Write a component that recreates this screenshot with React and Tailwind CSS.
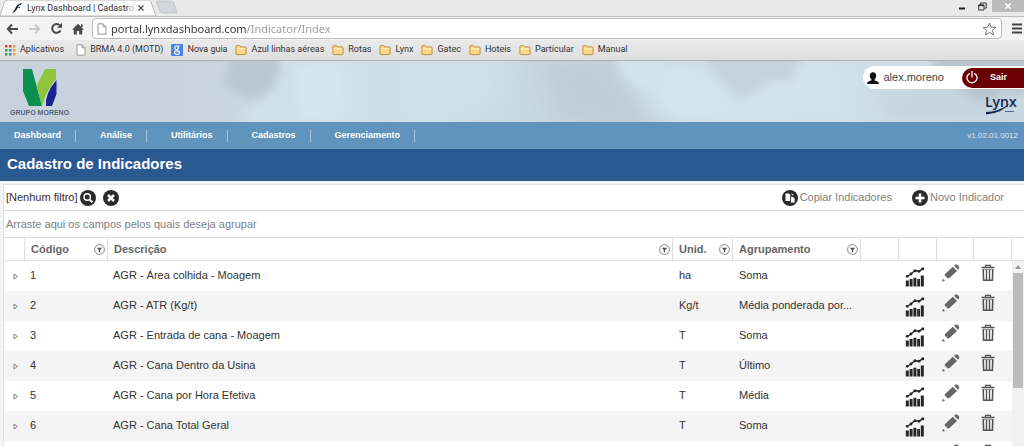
import { useState } from 'react';

const bookmarks = ['Azul linhas aéreas', 'Rotas', 'Lynx', 'Gatec', 'Hoteis', 'Particular', 'Manual'];
const menu = ['Dashboard', 'Análise', 'Utilitários', 'Cadastros', 'Gerenciamento'];

const rows = [
  { code: '1', name: 'AGR - Área colhida - Moagem', unit: 'ha', group: 'Soma' },
  { code: '2', name: 'AGR - ATR (Kg/t)', unit: 'Kg/t', group: 'Média ponderada por...' },
  { code: '3', name: 'AGR - Entrada de cana - Moagem', unit: 'T', group: 'Soma' },
  { code: '4', name: 'AGR - Cana Dentro da Usina', unit: 'T', group: 'Último' },
  { code: '5', name: 'AGR - Cana por Hora Efetiva', unit: 'T', group: 'Média' },
  { code: '6', name: 'AGR - Cana Total Geral', unit: 'T', group: 'Soma' },
  { code: '', name: '', unit: '', group: '' },
];

const appColors = ['#d9453a', '#d9453a', '#e8a13a', '#3f9c55', '#4a7fd6', '#e8a13a', '#3f9c55', '#4a7fd6', '#e8a13a'];

function FolderIcon() {
  return (
    <svg width="12" height="12" viewBox="0 0 13 12">
      <path d="M1 10V2.2Q1 1.3 1.9 1.3H5L6.2 2.7H11Q12 2.7 12 3.7V10Q12 11 11 11H2Q1 11 1 10Z" fill="#fbd98b" stroke="#b98a3c" />
      <path d="M2 4.5H11" stroke="#fff0c4" />
    </svg>
  );
}

function PageIcon({ className }) {
  return (
    <svg className={className} viewBox="0 0 10 12" fill="#fff" stroke="#8f8f8f" strokeWidth="0.9">
      <path d="M1 .8H6L9 3.8V11.2H1Z" />
      <path d="M6 .8V3.8H9" fill="none" />
    </svg>
  );
}

function FilterIcon() {
  return (
    <svg width="11" height="11" viewBox="0 0 11 11">
      <circle cx="5.5" cy="5.5" r="4.9" fill="#fff" stroke="#777" strokeWidth="0.9" />
      <path d="M2.8 3.8H8.2L6.2 6V8.3H4.8V6Z" fill="#555" />
    </svg>
  );
}

function ChartIcon() {
  return (
    <svg width="20" height="20" viewBox="0 0 20 20" fill="#262626">
      <path d="M.8 13.5H3.8V19.5H.8ZM4.6 12H7.6V19.5H4.6ZM8.4 10.8H11.4V19.5H8.4ZM12.2 12H15V19.5H12.2ZM15.8 8.5H18.8V19.5H15.8Z" />
      <path d="M2 9.5L6 7L10 3.5L14 4.2L18 1.6" fill="none" stroke="#262626" strokeWidth="1.4" />
      <circle cx="2.2" cy="9.3" r="1.4" />
      <circle cx="6" cy="7" r="1.4" />
      <circle cx="10" cy="3.7" r="1.5" />
      <circle cx="14" cy="4.3" r="1.4" />
      <circle cx="17.8" cy="1.7" r="1.5" />
    </svg>
  );
}

function PencilIcon() {
  return (
    <svg width="18" height="18" viewBox="0 0 18 18" fill="#666">
      <path d="M10.8 2.8L15 6.9L7.2 14.3L5 14.2L4.4 12.6L2.9 12.3L2.8 10.2Z" />
      <path d="M12 1.8L13.4 .6Q15 0 16.4 1.4Q17.8 2.8 17 4.4L16 5.8Z" />
      <path d="M.6 17.2L.9 15.2L2.6 16.8Z" stroke="#666" strokeWidth="0.6" />
    </svg>
  );
}

function TrashIcon() {
  return (
    <svg width="14" height="18" viewBox="0 0 14 18" fill="none" stroke="#555">
      <path d="M.5 3.5H13.5" strokeWidth="1.6" />
      <path d="M4.5 3V1.3H9.5V3" strokeWidth="1.2" />
      <path d="M2 5.6H12" stroke="#8a8a8a" />
      <path d="M2.2 5.2L2.6 16.3H11.4L11.8 5.2" strokeWidth="1.6" />
      <path d="M5.5 6V16M8.5 6V16" strokeWidth="1.4" />
    </svg>
  );
}

function Clouds() {
  return (
    <svg className="absolute inset-0 h-full w-full" viewBox="0 0 1024 61" preserveAspectRatio="none">
      <defs>
        <linearGradient id="sky">
          <stop offset="0" stopColor="#c6d3dc" />
          <stop offset="0.2" stopColor="#c8d5de" />
          <stop offset="0.32" stopColor="#d0e0e9" />
          <stop offset="0.5" stopColor="#c9dae4" />
          <stop offset="0.62" stopColor="#c0ced7" />
          <stop offset="0.7" stopColor="#cfe0e9" />
          <stop offset="1" stopColor="#cbdbe5" />
        </linearGradient>
        <filter id="soft" x="-40%" y="-60%" width="180%" height="220%"><feGaussianBlur stdDeviation="14 9" /></filter>
        <filter id="edge" x="-20%" y="-40%" width="140%" height="180%">
          <feTurbulence type="fractalNoise" baseFrequency="0.05" numOctaves="3" seed="4" result="n" />
          <feDisplacementMap in="SourceGraphic" in2="n" scale="14" />
          <feGaussianBlur stdDeviation="4" />
        </filter>
      </defs>
      <rect width="1024" height="61" fill="url(#sky)" />
      <g filter="url(#soft)">
        <path d="M290 0H345V61H270L280 30Z" fill="#d4e6f0" />
        <path d="M400 0H500L490 40L440 61H410Z" fill="#d0e1eb" />
        <path d="M540 0H615L655 61H560Z" fill="#bfcdd6" />
        <path d="M620 0H700L735 40L720 61H660Z" fill="#d3e5ee" />
        <path d="M790 0H850V61H730L750 30Z" fill="#d3e3ec" />
        <path d="M880 30L960 26L1024 40V61H890Z" fill="#c5d4df" />
      </g>
      <g filter="url(#edge)">
        <path d="M228 -8H278L282 18L270 28L262 36H240L224 24Z" fill="#bac8d2" />
        <path d="M282 8L292 2L300 61H236L244 48L264 38Z" fill="#cfe0ea" />
        <path d="M700 -8H805L792 14L770 24L748 30L740 38L722 20Z" fill="#c3d2db" />
        <path d="M615 -8H660L665 28L640 28L624 14Z" fill="#d1e3ec" />
        <path d="M930 -8H1032V30L980 40L960 30L938 14Z" fill="#b6c5d0" />
      </g>
    </svg>
  );
}

function BrowserBar() {
  return (
    <div className="bg-[#e9e9e9] font-[Roboto,sans-serif] text-[#333]">
      <div className="flex h-4 items-start">
        <div className="relative flex h-4 w-[156px] items-center gap-1 pl-3">
          <svg className="absolute inset-0" width="156" height="16" viewBox="0 0 156 16">
            <path d="M0 16L4 3Q5 0 8 0H148Q150 0 151 2L156 16Z" fill="#fbfbfb" stroke="#bbb" />
          </svg>
          <svg className="relative" width="11" height="11" viewBox="0 0 11 11">
            <path d="M0 10Q3 7 4 4Q5 1 10 0L9 2Q6 2 5.5 5Q4 9 0 10Z" fill="#1c2541" />
            <path d="M4 4L8 4.4" stroke="#1c2541" />
          </svg>
          <span className="relative min-w-[104px] whitespace-nowrap text-[9px] leading-4">Lynx Dashboard | Cadastr<span className="text-[#bbb]">o</span></span>
          <button aria-label="Fechar aba" className="relative">
            <svg width="6" height="6" viewBox="0 0 6 6" stroke="#555" strokeWidth="1.3"><path d="M.5 .5L5.5 5.5M5.5 .5L.5 5.5" /></svg>
          </button>
        </div>
        <svg width="22" height="14" viewBox="0 0 22 14"><path d="M0 1H15Q17 1 18 3L21 13H7Q5 13 4 11Z" fill="#d3d7dc" stroke="#c4c8cc" /></svg>
        <div className="ml-auto flex items-start">
          <button aria-label="Minimizar" className="flex h-3 w-5 items-center justify-center">
            <svg width="6" height="8" viewBox="0 0 6 8"><path d="M0 6.5H6" stroke="#222" strokeWidth="2" /></svg>
          </button>
          <button aria-label="Restaurar" className="flex h-3 w-5 items-center justify-center">
            <svg width="9" height="9" viewBox="0 0 9 9" fill="none" stroke="#333"><path d="M.7 3H6V8H.7ZM2.5 2.5V1H8.2V6.2H6.5" /><path d="M.5 3.4H6" strokeWidth="1.5" /></svg>
          </button>
          <button aria-label="Fechar" className="flex h-3 w-8 items-center justify-center bg-[#bcbcbc]">
            <svg width="6" height="6" viewBox="0 0 6 6" stroke="#fff" strokeWidth="1.5"><path d="M.5 .5L5.5 5.5M5.5 .5L.5 5.5" /></svg>
          </button>
        </div>
      </div>
      <div className="flex h-6 items-center border-t border-[#bdbdbd] bg-[#f3f3f3] pl-1.5">
        <button aria-label="Voltar" className="w-[22px]">
          <svg width="13" height="12" viewBox="0 0 13 12" fill="none" stroke="#4a4a4a" strokeWidth="2"><path d="M6 1.5L1.8 6L6 10.5M2 6H12" /></svg>
        </button>
        <button aria-label="Avançar" className="w-[22px]">
          <svg width="13" height="12" viewBox="0 0 13 12" fill="none" stroke="#c8c8c8" strokeWidth="2"><path d="M7 1.5L11.2 6L7 10.5M1 6H11" /></svg>
        </button>
        <button aria-label="Recarregar" className="w-[22px]">
          <svg width="13" height="13" viewBox="0 0 13 13" fill="none" stroke="#4a4a4a" strokeWidth="2"><path d="M10.5 8.5A4.4 4.4 0 1 1 9.8 3.4" /><path d="M12 .8V5.8H7Z" fill="#4a4a4a" stroke="none" /></svg>
        </button>
        <button aria-label="Início" className="w-5">
          <svg width="12" height="12" viewBox="0 0 12 12" fill="#4a4a4a"><path d="M6 .8L12 6.8H10.2V11.5H7.2V8H4.8V11.5H1.8V6.8H0Z" /><path d="M9 1.2H10.6V4H9Z" /></svg>
        </button>
        <div className="flex h-[21px] min-w-0 flex-1 items-center gap-1 rounded-sm border border-[#bdbdbd] bg-white px-1">
          <PageIcon className="h-3 w-2.5" />
          <input
            type="text"
            aria-label="Endereço"
            defaultValue="portal.lynxdashboard.com/Indicator/Index"
            className="h-[19px] min-w-0 flex-1 bg-[linear-gradient(90deg,#333_136px,#999_136px)] bg-clip-text font-['Noto_Sans',sans-serif] text-[11px] text-transparent outline-none"
          />
          <svg width="15" height="14" viewBox="0 0 15 14" fill="none" stroke="#777"><path d="M7.5 1L9.3 5.2L14 5.5L10.4 8.4L11.6 13L7.5 10.5L3.4 13L4.6 8.4L1 5.5L5.7 5.2Z" /></svg>
        </div>
        <button aria-label="Menu" className="flex w-[22px] justify-end pr-0.5">
          <svg width="10" height="11" viewBox="0 0 10 11" stroke="#444" strokeWidth="2"><path d="M0 1.5H10M0 5.5H10M0 9.5H10" /></svg>
        </button>
      </div>
      <div className="flex h-[21px] items-center gap-2 whitespace-nowrap border-b border-[#a9b3b8] bg-linear-to-b from-[#eaeaea] to-[#dedede] pl-[5px] text-[9px]">
        <a href="#apps" className="flex items-center gap-1 pr-1">
          <svg width="11" height="11" viewBox="0 0 11 11">
            {appColors.map((c, i) => <rect key={i} x={(i % 3) * 4} y={Math.floor(i / 3) * 4} width="2.5" height="2.5" fill={c} />)}
          </svg>
          Aplicativos
        </a>
        <a href="#brma" className="flex items-center gap-1"><PageIcon className="h-3 w-2.5" />BRMA 4.0 (MOTD)</a>
        <a href="#nova" className="flex items-center gap-1">
          <svg width="12" height="12" viewBox="0 0 12 12"><rect width="12" height="12" rx="1" fill="#4a83ec" /><g fill="none" stroke="#fff" strokeWidth="1.2"><circle cx="5.6" cy="3.8" r="1.8" /><ellipse cx="6" cy="8.6" rx="2.5" ry="1.8" /><path d="M6.5 2H8.5M6.5 5.3L5.5 6.6" /></g></svg>
          Nova guia
        </a>
        {bookmarks.map((b) => (
          <a key={b} href="#pasta" className="flex items-center gap-1"><FolderIcon />{b}</a>
        ))}
      </div>
    </div>
  );
}

function Header() {
  return (
    <header className="relative flex h-[61px] shrink-0 justify-between">
      <Clouds />
      <div className="relative flex flex-col items-center pl-2.5 pt-2">
        <svg width="36" height="38" viewBox="0 0 36 38">
          <path d="M1 0H10L20 37H7L1 22Z" fill="#0a9150" />
          <path d="M23 0H34V10Q25 20 20 37L14.5 17Z" fill="#8fc63d" />
          <path d="M34.5 11V25L30 37H24Q23 24 34.5 11Z" fill="#17248f" />
        </svg>
        <span className="mt-0.5 text-[7px] leading-2 font-bold text-[#54657f]">GRUPO MORENO</span>
      </div>
      <div className="relative flex flex-col items-end pt-[5px]">
        <div className="flex h-[23px] items-center rounded-l-full bg-white pl-1">
          <svg width="12" height="12" viewBox="0 0 12 12" fill="#111"><ellipse cx="6" cy="3.8" rx="3.2" ry="3.6" /><path d="M0 12Q0 9 4.3 8.5V6H7.7V8.5Q12 9 12 12Z" /></svg>
          <span className="pl-1 pr-[18px] text-[11px] text-[#444]">alex.moreno</span>
          <button className="flex h-5 w-[62px] items-center rounded-l-full bg-[#6a0002] pl-1 text-[9px] font-bold text-white">
            <svg width="12" height="13" viewBox="0 0 12 13" fill="none" stroke="#fff" strokeWidth="1.3"><path d="M3.8 2.3A5 5 0 1 0 8.2 2.3M6 0V6.5" /></svg>
            <span className="pl-3">Sair</span>
          </button>
        </div>
        <svg className="mr-1.5 mt-1" width="33" height="24" viewBox="0 0 33 24">
          <text x="0" y="14" fontSize="14" fontWeight="600" fontFamily="Open Sans, sans-serif" fill="#14284b">Lynx</text>
          <path d="M1 19Q13 18.5 21 13L25 10Q18 20 1 21.5Z" fill="#14284b" />
          <path d="M20 18.5H29" stroke="#51678a" />
        </svg>
      </div>
    </header>
  );
}

export default function App() {
  const [open, setOpen] = useState(null);

  return (
    <div className="flex h-screen flex-col overflow-hidden bg-[#f3f4f8] font-['Liberation_Sans',sans-serif] text-[11px] text-[#333]">
      <BrowserBar />
      <Header />
      <nav className="flex h-[27px] shrink-0 items-center bg-[#6094bd] text-[9px] font-bold text-white">
        {menu.map((m) => (
          <a key={m} href="#menu" className="mr-2.5 flex h-3 items-center border-r border-[#a3c3dc] px-3.5">{m}</a>
        ))}
        <span className="ml-auto pr-1.5 text-[8px] font-normal text-[#d9e8f4]">v1.02.01.0012</span>
      </nav>
      <h1 className="h-8 shrink-0 bg-[#2a5992] pl-[7px] text-[15px] leading-[30px] font-bold text-white">Cadastro de Indicadores</h1>

      <main className="ml-[3px] mt-[3px] flex min-h-0 flex-1 flex-col border-l border-t border-[#e0e0e0] bg-white">
        <div className="flex h-[26px] shrink-0 items-center border-b border-[#ddd] pl-0.5 pr-5">
          <span className="text-[#3b2b35]">[Nenhum filtro]</span>
          <button aria-label="Pesquisar" className="ml-0.5">
            <svg width="16" height="16" viewBox="0 0 16 16"><circle cx="8" cy="8" r="8" fill="#2b2b2b" /><circle cx="7.2" cy="7" r="3.2" fill="none" stroke="#fff" strokeWidth="1.4" /><path d="M9.4 9.4L12.4 12.2" stroke="#fff" strokeWidth="2" /></svg>
          </button>
          <button aria-label="Limpar filtro" className="ml-[7px]">
            <svg width="16" height="16" viewBox="0 0 16 16"><circle cx="8" cy="8" r="8" fill="#2b2b2b" /><path d="M5 5L11 11M11 5L5 11" stroke="#fff" strokeWidth="2.6" /></svg>
          </button>
          <button className="ml-auto flex items-center gap-0.5 text-[#808080]">
            <svg width="16" height="16" viewBox="0 0 16 16"><circle cx="8" cy="8" r="8" fill="#2b2b2b" /><path d="M3.5 3.5H7L8.5 5V11H3.5Z" fill="#fff" /><path d="M8.5 6.5H11L13 8.5V13H8.5Z" fill="#fff" stroke="#2b2b2b" strokeWidth="0.8" /><path d="M9.5 4Q11 4 11 5.5" fill="none" stroke="#fff" /></svg>
            Copiar Indicadores
          </button>
          <button className="ml-5 flex items-center gap-0.5 text-[#808080]">
            <svg width="16" height="16" viewBox="0 0 16 16"><circle cx="8" cy="8" r="8" fill="#2b2b2b" /><path d="M8 3.5V12.5M3.5 8H12.5" stroke="#fff" strokeWidth="2.6" /></svg>
            Novo Indicador
          </button>
        </div>
        <div className="flex h-[27px] shrink-0 items-center border-b border-[#ddd] pl-0.5 text-[#808080]">Arraste aqui os campos pelos quais deseja agrupar</div>

        <div className="flex min-h-0 flex-1">
          <div className="min-w-0 flex-1 overflow-hidden">
            <table className="w-full table-fixed border-separate border-spacing-0 text-left">
              <colgroup>
                <col className="w-[21px]" />
                <col className="w-[83px]" />
                <col />
                <col className="w-[60px]" />
                <col className="w-[128px]" />
                <col className="w-[38px]" />
                <col className="w-[38px]" />
                <col className="w-[37px]" />
                <col className="w-[38px]" />
              </colgroup>
              <thead className="text-[#666]">
                <tr className="h-[23px]">
                  <th className="border-r border-b border-[#ddd]"></th>
                  {['Código', 'Descrição', 'Unid.', 'Agrupamento'].map((h) => (
                    <th key={h} className="border-r border-b border-[#ddd] pl-1.5 pr-0.5">
                      <div className="flex items-center justify-between">{h}<button aria-label={'Filtrar ' + h}><FilterIcon /></button></div>
                    </th>
                  ))}
                  {[1, 2, 3, 4].map((n) => <th key={n} className="border-r border-b border-[#ddd]"></th>)}
                </tr>
              </thead>
              <tbody>
                {rows.map((r, i) => (
                  <tr key={i} className="h-[30px] even:bg-[#f4f4f4]">
                    <td className="pl-[9px]">
                      <button aria-label="Expandir" aria-expanded={open === i} onClick={() => setOpen(open === i ? null : i)} className="block">
                        <svg width="6" height="7" viewBox="0 0 6 7" fill="none" stroke="#777" strokeWidth="0.9"><path d="M1 1L4.5 3.5L1 6Z" /></svg>
                      </button>
                    </td>
                    <td className="pb-0.5 pl-[5px]">{r.code}</td>
                    <td className="pb-0.5 pl-[5px]">{r.name}</td>
                    <td className="pb-0.5 pl-1.5">{r.unit}</td>
                    <td className="whitespace-nowrap pb-0.5 pl-1.5">{r.group}</td>
                    <td></td>
                    <td className="pt-0.5 pl-1.5"><button aria-label="Gráfico" className="block"><ChartIcon /></button></td>
                    <td className="pb-1.5 pl-[5px]"><button aria-label="Editar" className="block"><PencilIcon /></button></td>
                    <td className="pb-1.5 pl-[7px]"><button aria-label="Excluir" className="block"><TrashIcon /></button></td>
                  </tr>
                ))}
              </tbody>
            </table>
          </div>
          <div className="flex w-3 flex-col">
            <div className="h-[23px] border-b border-[#ddd]"></div>
            <div className="flex flex-1 flex-col bg-[#f1f1f1] px-px">
              <svg className="mx-auto my-1" width="6" height="4" viewBox="0 0 6 4"><path d="M3 0L6 4H0Z" fill="#999" /></svg>
              <div className="h-[115px] bg-[#bcbcbc]"></div>
            </div>
          </div>
        </div>
      </main>
    </div>
  );
}
